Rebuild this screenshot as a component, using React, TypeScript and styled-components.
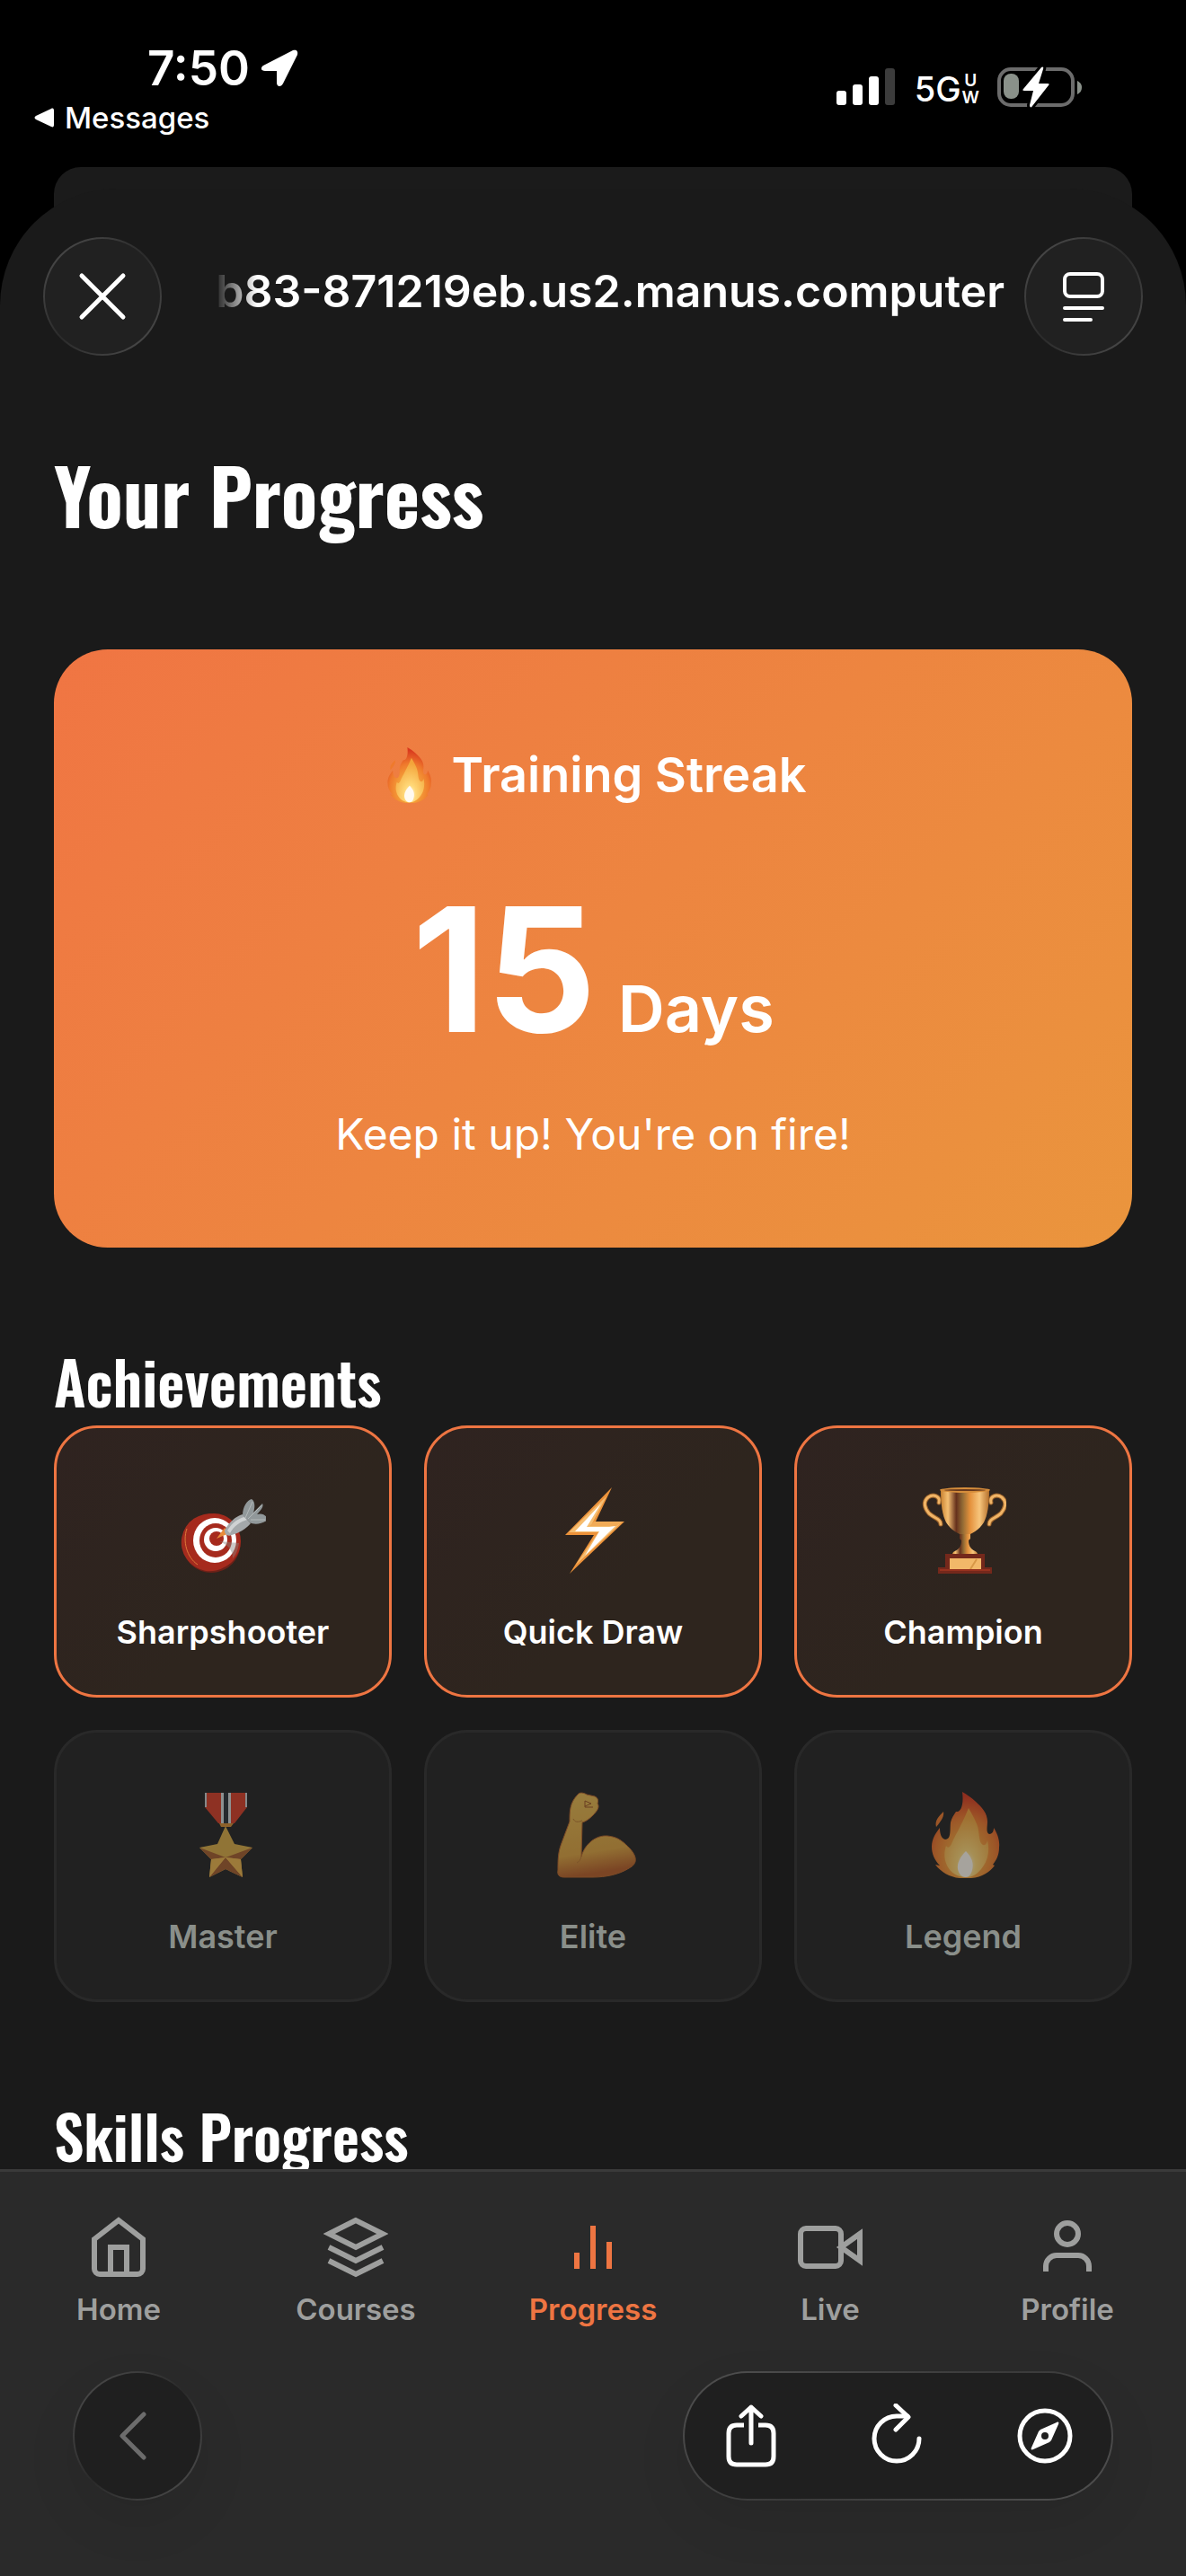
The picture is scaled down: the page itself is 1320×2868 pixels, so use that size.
import React, { useId } from "react";
import styled, { createGlobalStyle } from "styled-components";

const accent = "#ee7542";
const surface = "#1a1a1a";
const bodyFont = `Inter, "Liberation Sans", sans-serif`;
const headingFont = `Oswald, "Roboto Condensed", "Liberation Sans Narrow", "Liberation Sans", sans-serif`;

const GlobalStyle = createGlobalStyle`
  *, *::before, *::after { box-sizing: border-box; }
  body { margin: 0; background: #000; }
  button { font: inherit; color: inherit; cursor: pointer; }
  h1, h2, h3, p, ul { margin: 0; padding: 0; }
`;

const Screen = styled.div`
  display: flex;
  flex-direction: column;
  height: 100vh;
  background: #000;
  color: #fff;
  font-family: ${bodyFont};
`;

/* ---------- Status bar ---------- */

const StatusBar = styled.header`
  display: flex;
  justify-content: space-between;
  padding: 45px 116px 31px 38px;
`;

const TimeRow = styled.div`
  display: flex;
  align-items: center;
  gap: 12px;
  padding-left: 126px;
  font-size: 53px;
  font-weight: 600;
  line-height: 62px;
`;

const BackToApp = styled.a`
  display: flex;
  align-items: center;
  gap: 11px;
  color: #fff;
  text-decoration: none;
  font-size: 33px;
  font-weight: 500;
  line-height: 48px;
`;

const StatusIcons = styled.div`
  display: flex;
  align-items: center;
  align-self: flex-start;
  height: 104px;
`;

const Network = styled.span`
  display: flex;
  align-items: center;
  gap: 1px;
  margin: 4px 20px 0 21px;
  font-size: 38px;
  font-weight: 500;
  line-height: 40px;
`;

const NetworkBand = styled.span`
  display: flex;
  flex-direction: column;
  align-items: center;
  font-size: 19px;
  font-weight: 600;
  line-height: 19px;
`;

/* ---------- Browser sheet ---------- */

const BackSheet = styled.div`
  flex: none;
  height: 60px;
  margin: 0 60px -36px;
  border-radius: 30px 30px 0 0;
  background: #1b1b1b;
`;

const Sheet = styled.section`
  display: flex;
  flex: 1;
  flex-direction: column;
  min-height: 0;
  overflow: hidden;
  border-radius: 130px 130px 0 0;
  background: ${surface};
`;

const AddressBar = styled.div`
  display: flex;
  flex: none;
  align-items: center;
  gap: 22px;
  padding: 54px 48px 0;
`;

const GlassButton = styled.button<{ $size: number }>`
  display: flex;
  flex: none;
  align-items: center;
  justify-content: center;
  width: ${(p) => p.$size}px;
  height: ${(p) => p.$size}px;
  padding: 0;
  border: 2px solid transparent;
  border-radius: 50%;
  background:
    linear-gradient(#212121, #212121) padding-box,
    linear-gradient(135deg, #505050, #2b2b2b 50%, #505050) border-box;
`;

const Address = styled.div`
  display: flex;
  flex: 1;
  justify-content: flex-end;
  min-width: 0;
  margin-left: 36px;
  padding-bottom: 12px;
  overflow: hidden;
  white-space: nowrap;
  font-size: 50px;
  font-weight: 600;
  line-height: 64px;
  mask-image: linear-gradient(to right, transparent, #000 48px);
`;

const Content = styled.main`
  flex: 1;
  min-height: 0;
  padding: 91px 60px 60px;
  overflow: hidden auto;
  scrollbar-width: none;
`;

const PageTitle = styled.h1`
  margin-bottom: 110px;
  font-family: ${headingFont};
  font-size: 84px;
  font-weight: 700;
  line-height: 126px;
`;

const SectionTitle = styled.h2`
  margin-top: 98px;
  font-family: ${headingFont};
  font-size: 66px;
  font-weight: 600;
  line-height: 100px;
`;

/* ---------- Streak card ---------- */

const StreakCard = styled.section`
  display: flex;
  flex-direction: column;
  align-items: center;
  padding: 90px 60px;
  border-radius: 60px;
  background: linear-gradient(135deg, #f07543, #ea953d);
`;

const StreakHeading = styled.h3`
  display: flex;
  align-items: center;
  gap: 18px;
  margin-bottom: 54px;
  font-size: 54px;
  font-weight: 600;
  line-height: 100px;
`;

const StreakCount = styled.p`
  display: flex;
  align-items: baseline;
  gap: 24px;
  margin-bottom: 36px;
  font-size: 192px;
  font-weight: 700;
  line-height: 224px;
`;

const StreakUnit = styled.span`
  font-size: 72px;
  font-weight: 600;
  line-height: 72px;
`;

const StreakNote = styled.p`
  font-size: 48px;
  line-height: 72px;
`;

/* ---------- Achievements ---------- */

const BadgeGrid = styled.ul`
  display: grid;
  grid-template-columns: repeat(3, 1fr);
  gap: 36px;
  list-style: none;
`;

const Badge = styled.li<{ $locked: boolean }>`
  display: flex;
  flex-direction: column;
  align-items: center;
  gap: 15px;
  padding: 48px 12px 38px;
  border: 3px solid ${(p) => (p.$locked ? "#292929" : accent)};
  border-radius: 48px;
  background: ${(p) => (p.$locked ? "#212121" : "linear-gradient(135deg, #2f2320, #2e251e 60%)")};
  color: ${(p) => (p.$locked ? "#8a8f8a" : "#fff")};
  font-size: 36px;
  font-weight: 600;
  line-height: 64px;

  svg {
    opacity: ${(p) => (p.$locked ? 0.6 : 1)};
  }
`;

const BadgeIcon = styled.span`
  display: flex;
  align-items: center;
  height: 132px;
`;

/* ---------- Bottom bars ---------- */

const BottomArea = styled.footer`
  flex: none;
  border-top: 3px solid #3a3a3a;
  background: #2a2a2a;
`;

const TabBar = styled.nav`
  display: flex;
  padding-top: 48px;
`;

const Tab = styled.a<{ $active?: boolean }>`
  display: flex;
  flex: 1;
  flex-direction: column;
  align-items: center;
  gap: 12px;
  color: ${(p) => (p.$active ? accent : "#9e9f9e")};
  text-decoration: none;
  font-size: 33px;
  font-weight: 600;
  line-height: 42px;
`;

const Toolbar = styled.div`
  display: flex;
  justify-content: space-between;
  padding: 48px 81px 84px;
`;

const BackButton = styled(GlassButton)`
  background:
    linear-gradient(#1f1f1f, #1f1f1f) padding-box,
    linear-gradient(135deg, #505050, #2a2a2a 50%, #505050) border-box;
  box-shadow: 0 24px 60px rgba(0, 0, 0, 0.08);
`;

const ToolGroup = styled.div`
  display: flex;
  align-items: center;
  justify-content: space-between;
  width: 479px;
  height: 144px;
  padding: 0 40px;
  border: 2px solid transparent;
  border-radius: 72px;
  background:
    linear-gradient(#1f1f1f, #1f1f1f) padding-box,
    linear-gradient(150deg, #505050, #3a3a3a 50%, #505050) border-box;
  box-shadow: 0 24px 60px rgba(0, 0, 0, 0.08);
`;

const ToolButton = styled.button`
  display: flex;
  align-items: center;
  justify-content: center;
  width: 68px;
  height: 96px;
  padding: 0;
  border: 0;
  background: none;
`;

/* ---------- Drawings ---------- */

const FlameIcon = ({ size = 96 }: { size?: number }) => {
  const id = useId();
  return (
    <svg width={size} height={size} viewBox="0 0 96 96" aria-hidden="true">
      <defs>
        <radialGradient id={id + "o"} cx="0.5" cy="0.75" r="0.7">
          <stop offset="0.3" stopColor="#f5a63c" />
          <stop offset="0.65" stopColor="#ef7a2c" />
          <stop offset="1" stopColor="#d9381e" />
        </radialGradient>
        <radialGradient id={id + "i"} cx="0.5" cy="0.82" r="0.7">
          <stop offset="0" stopColor="#fff7df" />
          <stop offset="0.3" stopColor="#ffd877" />
          <stop offset="1" stopColor="#f3a43a" />
        </radialGradient>
      </defs>
      <path
        d="M47 0C52 3 57 6 61 10C69 17 75 24 75 33C75 38 73 46 77 47C81 47 82 43 82 40C86 46 89 54 88 62C88 70 85 76 81 81L83 82C78 89 69 95 57 96H44C33 95 23 89 17 81L22 82C16 76 13 69 13 61C13 52 18 45 22 40C22 45 23 52 28 53C35 53 33 42 34 34C35 29 38 25 40 22C45 23 49 15 47 0Z"
        fill={`url(#${id}o)`}
      />
      <path d="M26 22C27 27 24 32 18 39C16 32 21 27 26 22Z" fill="#ef7a2c" />
      <path
        d="M54 18C57 24 64 34 65 43C66 50 66 57 70 59C73 60 74 57 75 54C78 66 75 78 68 86C63 92 58 95 51 95C42 95 34 90 30 82C26 73 27 66 29 60C31 63 33 62 35 58C39 48 47 36 54 18Z"
        fill={`url(#${id}i)`}
      />
      <path d="M51 66C58 73 60 80 58 87C57 92 54 95 51 95C46 95 43 91 42 86C41 79 45 72 51 66Z" fill="#fffaf0" />
    </svg>
  );
};

const TargetIcon = () => (
  <svg width="96" height="96" viewBox="0 0 96 96" aria-hidden="true">
    <g transform="rotate(-12 35 62)">
      <ellipse cx="35" cy="64" rx="32" ry="31" fill="#6d2118" />
      <ellipse cx="34" cy="61" rx="32" ry="32" fill="#a42b1e" />
    </g>
    <path d="M8 46C3 60 8 78 20 86" stroke="#dd7a3a" strokeWidth="1" fill="none" />
    <ellipse cx="38" cy="60" rx="30" ry="31" fill="#a62a1d" />
    <ellipse cx="39" cy="59" rx="24" ry="25" fill="#fff" />
    <ellipse cx="40" cy="59" rx="18" ry="19" fill="#a62a1d" />
    <ellipse cx="40" cy="58" rx="13" ry="13" fill="#fff" />
    <ellipse cx="41" cy="57" rx="8" ry="8" fill="#a62a1d" />
    <path d="M44 60L66 62C65 70 62 76 59 79C59 70 54 64 44 60Z" fill="#8b8581" opacity="0.45" />
    <path d="M41 57L50 45L55 51Z" fill="#e98c39" />
    <path d="M50 48C54 40 62 32 70 30L79 40C74 46 66 51 58 53C53 55 50 52 50 48Z" fill="#a4a8aa" />
    <path d="M53 48C58 40 64 35 72 33L75 36C68 38 60 43 56 51Z" fill="#cfd2d3" />
    <path d="M70 31C70 22 75 14 80 13C84 15 84 22 82 28L92 18C94 21 90 26 86 30C93 28 97 32 98 36C93 41 82 42 78 39Z" fill="#91989a" />
    <path d="M73 34L81 16M76 35L91 20M79 36L95 36" stroke="#b4b9ba" strokeWidth="1" />
  </svg>
);

const BoltIcon = () => (
  <svg width="96" height="96" viewBox="0 0 96 96" aria-hidden="true">
    <path d="M69 0L51 38H83L22 96L49 53H17Z" fill="#ec923a" />
    <path d="M63 10L47 40H79L29 86L54 50H21Z" fill="#f5bd70" />
    <path d="M57 18L41 44H66L73 43L39 76L55 49H28Z" fill="#fff" />
    <path d="M49 38H82L74 43H44Z" fill="#f1ab57" />
  </svg>
);

const TrophyIcon = () => {
  const id = useId();
  return (
    <svg width="96" height="96" viewBox="0 0 96 96" aria-hidden="true">
      <defs>
        <linearGradient id={id}>
          <stop offset="0" stopColor="#c98231" />
          <stop offset="0.15" stopColor="#f5bf72" />
          <stop offset="0.32" stopColor="#65301c" />
          <stop offset="0.45" stopColor="#916a34" />
          <stop offset="0.6" stopColor="#e3903b" />
          <stop offset="0.8" stopColor="#f7c57c" />
          <stop offset="1" stopColor="#b5702c" />
        </linearGradient>
      </defs>
      <g fill="none" strokeLinecap="round">
        <path d="M21 17C23 10 15 7 9 11C3 16 5 23 10 29C17 35 23 35 23 41" stroke="#97602a" strokeWidth="5" />
        <path d="M79 17C77 10 85 7 91 11C97 16 95 23 90 29C83 35 77 35 77 41" stroke="#97602a" strokeWidth="5" />
        <path d="M21 17C23 10 15 7 9 11C3 16 5 23 10 29C17 35 23 35 23 41" stroke="#f0b466" strokeWidth="3" />
        <path d="M79 17C77 10 85 7 91 11C97 16 95 23 90 29C83 35 77 35 77 41" stroke="#f0b466" strokeWidth="3" />
      </g>
      <path d="M23 2H77C77 20 75 31 71 39C66 47 58 52 50 54C42 52 34 47 29 39C25 31 23 20 23 2Z" fill={`url(#${id})`} />
      <ellipse cx="50" cy="3" rx="28" ry="3" fill="#d58d3b" />
      <ellipse cx="50" cy="3" rx="23" ry="1" fill="#693a1d" />
      <path d="M44 52H56V57L54 59C54 66 57 69 63 72L65 76H35L37 72C43 69 46 66 46 59L44 57Z" fill={`url(#${id})`} />
      <path d="M28 74H72V89H80V96H20V89H28Z" fill="#74281b" />
      <path d="M33 79H68V91H33Z" fill="#f2b869" />
      <path d="M56 91L63 80" stroke="#d89746" strokeWidth="2" />
      <path d="M22 92H78" stroke="#96321f" strokeWidth="2" />
    </svg>
  );
};

const MedalIcon = () => (
  <svg width="96" height="96" viewBox="0 0 96 96" aria-hidden="true">
    <path d="M28 1H75V17L61 35H43L28 17Z" fill="#d73d25" />
    <path d="M29 1V17M74 1V17" stroke="#c8cfd0" strokeWidth="2" />
    <path d="M46 1H57V35H46Z" fill="#d6dcdc" />
    <path d="M49 1H54V35H49Z" fill="#283038" />
    <path d="M44 35H60L57 39H46Z" fill="#d68c30" />
    <path d="M51 38L61 58L81 62L68 75L70 95L51 86L33 95L35 75L22 62L42 58Z" fill="#daab45" />
    <path d="M51 73L81 62L68 75ZM51 73L70 95L51 86L33 95ZM51 73L22 62L35 75Z" fill="#a35c2b" />
    <path d="M51 73L35 75L33 95ZM51 73L68 75L70 95Z" fill="#efb64c" />
  </svg>
);

const ArmIcon = () => {
  const id = useId();
  return (
    <svg width="96" height="96" viewBox="0 0 96 96" aria-hidden="true">
      <defs>
        <linearGradient id={id} x1="0" y1="0" x2="0.15" y2="1">
          <stop offset="0" stopColor="#e9bb51" />
          <stop offset="0.75" stopColor="#dda33f" />
          <stop offset="1" stopColor="#b75e27" />
        </linearGradient>
      </defs>
      <path
        d="M31 3C33 0 38 1 41 3L50 5C54 7 54 10 53 13C56 17 52 22 48 26C44 30 40 33 36 34L35 72C39 58 51 48 64 49C77 50 83 57 89 63C97 72 98 80 88 85C77 92 62 95 48 95H16C10 95 8 92 9 87C9 76 9 67 13 57L22 33C22 22 22 12 31 3Z"
        fill={`url(#${id})`}
        stroke="#b9662a"
        strokeWidth="1"
      />
      <path d="M39 10L46 13L39 16M39 10V17L48 17" fill="none" stroke="#9c5422" strokeWidth="1" />
      <path d="M26 30C28 34 31 34 36 32M35 72C34 76 32 78 30 79" fill="none" stroke="#b9762f" strokeWidth="1" />
    </svg>
  );
};

const TabIcon = ({ children }: { children: React.ReactNode }) => (
  <svg width="72" height="72" viewBox="0 0 24 24" fill="none" stroke="currentColor" strokeWidth="2" aria-hidden="true">
    {children}
  </svg>
);

const badges = [
  { name: "Sharpshooter", icon: <TargetIcon />, locked: false },
  { name: "Quick Draw", icon: <BoltIcon />, locked: false },
  { name: "Champion", icon: <TrophyIcon />, locked: false },
  { name: "Master", icon: <MedalIcon />, locked: true },
  { name: "Elite", icon: <ArmIcon />, locked: true },
  { name: "Legend", icon: <FlameIcon />, locked: true },
];

const tabs = [
  {
    name: "Home",
    icon: (
      <>
        <path d="M3 9l9-7 9 7v11a2 2 0 0 1-2 2H5a2 2 0 0 1-2-2z" />
        <polyline points="9 22 9 12 15 12 15 22" />
      </>
    ),
  },
  {
    name: "Courses",
    icon: (
      <>
        <polygon points="12 2 2 7 12 12 22 7 12 2" />
        <polyline points="2 17 12 22 22 17" />
        <polyline points="2 12 12 17 22 12" />
      </>
    ),
  },
  {
    name: "Progress",
    active: true,
    icon: (
      <>
        <line x1="18" y1="20" x2="18" y2="10" />
        <line x1="12" y1="20" x2="12" y2="4" />
        <line x1="6" y1="20" x2="6" y2="14" />
      </>
    ),
  },
  {
    name: "Live",
    icon: (
      <>
        <polygon points="23 7 16 12 23 17 23 7" />
        <rect x="1" y="5" width="15" height="14" rx="2" ry="2" />
      </>
    ),
  },
  {
    name: "Profile",
    icon: (
      <>
        <path d="M20 21v-2a4 4 0 0 0-4-4H8a4 4 0 0 0-4 4v2" />
        <circle cx="12" cy="7" r="4" />
      </>
    ),
  },
];

export default function App() {
  return (
    <Screen>
      <GlobalStyle />
      <StatusBar>
        <div>
          <TimeRow>
            <span>7:50</span>
            <svg width="42" height="42" viewBox="0 0 42 42" aria-hidden="true">
              <path d="M3 18L36 1C40 0 42 2 41 6L25 38C23 42 18 42 18 37V24H5C0 24 0 20 3 18Z" fill="#fff" />
            </svg>
          </TimeRow>
          <BackToApp href="#messages">
            <svg width="23" height="22" viewBox="0 0 23 22" aria-hidden="true">
              <path d="M2 9L19 1C21 0 22 1 22 3V19C22 21 21 22 19 21L2 13C0 12 0 10 2 9Z" fill="#fff" />
            </svg>
            Messages
          </BackToApp>
        </div>
        <StatusIcons>
          <svg width="66" height="42" viewBox="0 0 66 42" aria-hidden="true">
            <rect x="0" y="25" width="11" height="16" rx="3" fill="#fff" />
            <rect x="18" y="18" width="11" height="23" rx="3" fill="#fff" />
            <rect x="36" y="9" width="11" height="32" rx="3" fill="#fff" />
            <rect x="54" y="0" width="11" height="41" rx="3" fill="#3c3c3c" />
          </svg>
          <Network>
            5G
            <NetworkBand>
              <span>U</span>
              <span>W</span>
            </NetworkBand>
          </Network>
          <svg width="94" height="46" viewBox="0 0 94 46" aria-hidden="true">
            <rect x="2" y="3" width="82" height="40" rx="13" fill="none" stroke="#6c6c6c" strokeWidth="4" />
            <rect x="7" y="8" width="17" height="28" rx="8" fill="#8a918a" />
            <path d="M89 16C93 18 94 21 94 23C94 26 93 29 89 31Z" fill="#8a918a" />
            <path
              d="M49 1L29 25C28 26 28 27 30 27H40L36 43C36 46 38 46 39 44L57 21C58 20 58 19 56 19H46L51 3C52 0 50 0 49 1Z"
              fill="#fff"
              stroke="#000"
              strokeWidth="6"
              paintOrder="stroke"
            />
          </svg>
        </StatusIcons>
      </StatusBar>

      <BackSheet />
      <Sheet>
        <AddressBar>
          <GlassButton type="button" aria-label="Close" $size={132}>
            <svg width="54" height="54" viewBox="0 0 54 54" fill="none" stroke="#fff" strokeWidth="5" strokeLinecap="round" aria-hidden="true">
              <path d="M4 4L50 50M50 4L4 50" />
            </svg>
          </GlassButton>
          <Address>b83-871219eb.us2.manus.computer</Address>
          <GlassButton type="button" aria-label="Page menu" $size={132}>
            <svg width="46" height="56" viewBox="0 0 46 56" fill="none" stroke="#fff" strokeWidth="4" strokeLinecap="round" aria-hidden="true">
              <rect x="2" y="3" width="42" height="25" rx="6" />
              <path d="M2 41H44M2 54H31" />
            </svg>
          </GlassButton>
        </AddressBar>

        <Content>
          <PageTitle>Your Progress</PageTitle>

          <StreakCard>
            <StreakHeading>
              <FlameIcon size={62} />
              Training Streak
            </StreakHeading>
            <StreakCount>
              15 <StreakUnit>Days</StreakUnit>
            </StreakCount>
            <StreakNote>Keep it up! You're on fire!</StreakNote>
          </StreakCard>

          <SectionTitle>Achievements</SectionTitle>
          <BadgeGrid>
            {badges.map((badge) => (
              <Badge key={badge.name} $locked={badge.locked}>
                <BadgeIcon>{badge.icon}</BadgeIcon>
                {badge.name}
              </Badge>
            ))}
          </BadgeGrid>

          <SectionTitle>Skills Progress</SectionTitle>
        </Content>

        <BottomArea>
          <TabBar aria-label="Main">
            {tabs.map((tab) => (
              <Tab key={tab.name} href={"#" + tab.name.toLowerCase()} $active={tab.active}>
                <TabIcon>{tab.icon}</TabIcon>
                {tab.name}
              </Tab>
            ))}
          </TabBar>
          <Toolbar>
            <BackButton type="button" aria-label="Back" $size={144}>
              <svg width="40" height="56" viewBox="0 0 40 56" fill="none" stroke="#6c6c6c" strokeWidth="5" strokeLinecap="round" strokeLinejoin="round" aria-hidden="true">
                <path d="M27 4L3 28L27 52" />
              </svg>
            </BackButton>
            <ToolGroup>
              <ToolButton type="button" aria-label="Share">
                <svg width="56" height="70" viewBox="0 0 56 70" fill="none" stroke="#fff" strokeWidth="5" strokeLinecap="round" strokeLinejoin="round" aria-hidden="true">
                  <path d="M28 43V3M17 13L28 3L39 13" />
                  <path d="M20 23H12C6 23 3 26 3 32V58C3 64 6 67 12 67H44C50 67 53 64 53 58V32C53 26 50 23 44 23H36" strokeLinecap="butt" />
                </svg>
              </ToolButton>
              <ToolButton type="button" aria-label="Reload">
                <svg width="60" height="72" viewBox="0 0 60 72" fill="none" stroke="#fff" strokeWidth="5" strokeLinecap="round" strokeLinejoin="round" aria-hidden="true">
                  <path d="M53 39A25 25 0 1 1 28 14H40" />
                  <path d="M27 2L41 15L27 29" />
                </svg>
              </ToolButton>
              <ToolButton type="button" aria-label="Open in browser">
                <svg width="62" height="62" viewBox="0 0 62 62" fill="none" aria-hidden="true">
                  <circle cx="31" cy="31" r="28" stroke="#fff" strokeWidth="5" />
                  <path d="M44 16C46 15 47 16 46 18L38 36L36 38L18 46C16 47 15 46 16 44L24 26L26 24Z" fill="#fff" />
                  <circle cx="31" cy="31" r="4" fill="#1f1f1f" />
                </svg>
              </ToolButton>
            </ToolGroup>
          </Toolbar>
        </BottomArea>
      </Sheet>
    </Screen>
  );
}
